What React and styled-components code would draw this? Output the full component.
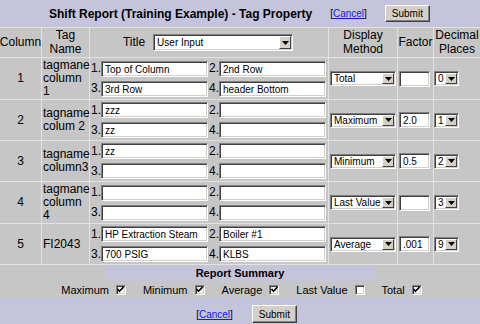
import React from 'react'
import styled, { createGlobalStyle } from 'styled-components'

const LAVENDER = '#c4c4dc'
const GRAY = '#c6c6c6'
const LINE = '#e2e2e2'

const GlobalStyle = createGlobalStyle`
  html, body {
    margin: 0;
    padding: 0;
    background: ${LAVENDER};
  }
  body {
    font-family: "Liberation Sans", Arial, sans-serif;
    color: #000;
  }
`

const Page = styled('main')`
  width: 480px;
  min-height: 324px;
  background: ${LAVENDER};
`

const TopBar = styled('header')`
  height: 27px;
  display: flex;
  align-items: center;
  gap: 18px;
  padding-left: 49px;
`

const PageTitle = styled('h1')`
  margin: 0;
  font-size: 12px;
  font-weight: bold;
`

const LinkText = styled('span')`
  font-size: 10px;
  color: #000;

  a {
    color: #1414ff;
    text-decoration: underline;
  }
`

const Button = styled('button')`
  width: 45px;
  height: ${p => p.$h || 17}px;
  padding: 0;
  margin: 0;
  font-family: "Liberation Sans", Arial, sans-serif;
  font-size: 10px;
  color: #000;
  background: #d4d0c8;
  border: 1px solid;
  border-color: #fff #404040 #404040 #fff;
  box-shadow: inset -1px -1px #808080;
`

const Grid = styled('section')`
  display: grid;
  grid-template-columns: 41px 47px 238px 68px 35px 46px;
  gap: 1px;
  padding: 1px 0;
  background: ${LINE};
`

const HeadCell = styled('div')`
  background: ${GRAY};
  font-size: 12px;
  line-height: 13.5px;
  height: 29px;
  display: flex;
  align-items: center;
  justify-content: center;
  text-align: center;
`

const Cell = styled('div')`
  box-sizing: border-box;
  background: ${GRAY};
  font-size: 12px;
  line-height: 13px;
  display: flex;
  align-items: center;
  justify-content: ${p => p.$align || 'center'};
  padding: ${p => p.$pad || '0'};
`

const TitleHead = styled(HeadCell)`
  gap: 8px;
  padding-right: 2px;
`

const Fields = styled('div')`
  display: grid;
  grid-template-columns: 11px 107px 11px 107px;
  grid-auto-rows: 20px;
  align-items: center;
  padding-right: 2px;
`

const FieldLabel = styled('span')`
  font-size: 12px;
  text-align: right;
`

const inset = `
  box-sizing: border-box;
  background: #fff;
  border: 1px solid;
  border-color: #808080 #fff #fff #808080;
  box-shadow: inset 1px 1px #404040, inset -1px -1px #d4d0c8;
`

const TextBox = styled('div')`
  ${inset}
  width: ${p => p.$w ? p.$w + 'px' : '100%'};
  height: 16px;
  padding: 1px 3px 0;
  font-size: 10px;
  line-height: 13px;
  text-align: left;
  white-space: nowrap;
  overflow: hidden;
`

const Dropdown = styled('div')`
  ${inset}
  width: ${p => p.$w}px;
  height: ${p => p.$h}px;
  display: flex;
  align-items: stretch;
  padding: 1px 1px 1px 3px;
  font-size: 10px;
  text-align: left;
`

const DropText = styled('span')`
  flex: 1;
  line-height: ${p => p.$h - 4}px;
  white-space: nowrap;
  overflow: hidden;
`

const DropButton = styled('span')`
  width: 12px;
  flex: none;
  box-sizing: border-box;
  background: #d4d0c8;
  border: 1px solid;
  border-color: #fff #404040 #404040 #fff;
  display: flex;
  align-items: center;
  justify-content: center;
`

const Summary = styled('section')`
  background: ${GRAY};
  padding-top: 1px;
`

const SummaryBand = styled('h2')`
  width: 270px;
  height: 15px;
  margin: 0 auto;
  background: ${LAVENDER};
  font-size: 11px;
  font-weight: bold;
  line-height: 15px;
  text-align: center;
`

const CheckRow = styled('div')`
  height: 17px;
  display: flex;
  align-items: center;
  justify-content: center;
  gap: 17px;
  padding-left: 3px;
`

const CheckItem = styled('label')`
  display: flex;
  align-items: center;
  gap: 7px;
  font-size: 11px;
`

const Box = styled('span')`
  ${inset}
  width: 10px;
  height: 10px;
  display: flex;
  align-items: center;
  justify-content: center;
  background: ${p => p.$on ? '#f0f0f0' : '#fff'};
`

const BottomBar = styled('footer')`
  display: flex;
  align-items: center;
  justify-content: center;
  gap: 19px;
  padding: 7px 0 0 13px;
`

const Arrow = () => (
  <svg width="7" height="4" viewBox="0 0 7 4">
    <polygon points="0,0 7,0 3.5,4" fill="#000" />
  </svg>
)

const Select = ({ w, h = 15, children }) => (
  <Dropdown $w={w} $h={h}>
    <DropText $h={h}>{children}</DropText>
    <DropButton><Arrow /></DropButton>
  </Dropdown>
)

const Check = ({ on }) => (
  <Box $on={on}>
    {on && (
      <svg width="7" height="7" viewBox="0 0 7 7">
        <path d="M0.5 3 L2.5 5.2 L6.5 1" stroke="#000" strokeWidth="1.6" fill="none" />
      </svg>
    )}
  </Box>
)

const Cancel = () => (
  <LinkText>[<a href="#">Cancel</a>]</LinkText>
)

const rows = [
  { n: 1, tag: ['tagmane', 'column', '1'], f: ['Top of Column', '2nd Row', '3rd Row', 'header Bottom'], method: 'Total', factor: '', dec: '0' },
  { n: 2, tag: ['tagname', 'colum 2'], f: ['zzz', '', 'zz', ''], method: 'Maximum', factor: '2.0', dec: '1' },
  { n: 3, tag: ['tagname', 'column3'], f: ['zz', '', '', ''], method: 'Minimum', factor: '0.5', dec: '2' },
  { n: 4, tag: ['tagmane', 'column', '4'], f: ['', '', '', ''], method: 'Last Value', factor: '', dec: '3' },
  { n: 5, tag: ['FI2043'], f: ['HP Extraction Steam', 'Boiler #1', '700 PSIG', 'KLBS'], method: 'Average', factor: '.001', dec: '9' },
]

const summary = [
  ['Maximum', true],
  ['Minimum', true],
  ['Average', true],
  ['Last Value', false],
  ['Total', true],
]

const Row = ({ n, tag, f, method, factor, dec }) => (
  <>
    <Cell>{n}</Cell>
    <Cell $align="flex-start" $pad="1px 0 1px 1px">
      <div>{tag.map((t, i) => <div key={i}>{t}</div>)}</div>
    </Cell>
    <Cell $align="stretch">
      <Fields>
        <FieldLabel>1.</FieldLabel><TextBox>{f[0]}</TextBox>
        <FieldLabel>2.</FieldLabel><TextBox>{f[1]}</TextBox>
        <FieldLabel>3.</FieldLabel><TextBox>{f[2]}</TextBox>
        <FieldLabel>4.</FieldLabel><TextBox>{f[3]}</TextBox>
      </Fields>
    </Cell>
    <Cell $align="flex-start" $pad="0 0 0 1px"><Select w={66}>{method}</Select></Cell>
    <Cell $align="flex-start" $pad="0 0 0 1px"><TextBox $w={31}>{factor}</TextBox></Cell>
    <Cell $align="flex-start"><Select w={25}>{dec}</Select></Cell>
  </>
)

const App = () => (
  <Page>
    <GlobalStyle />
    <TopBar>
      <PageTitle>Shift Report (Training Example) - Tag Property</PageTitle>
      <Cancel />
      <Button>Submit</Button>
    </TopBar>
    <Grid>
      <HeadCell>Column</HeadCell>
      <HeadCell>Tag<br />Name</HeadCell>
      <TitleHead>
        <span>Title</span>
        <Select w={140} h={17}>User Input</Select>
      </TitleHead>
      <HeadCell>Display<br />Method</HeadCell>
      <HeadCell>Factor</HeadCell>
      <HeadCell>Decimal<br />Places</HeadCell>
      {rows.map(r => <Row key={r.n} {...r} />)}
    </Grid>
    <Summary>
      <SummaryBand>Report Summary</SummaryBand>
      <CheckRow>
        {summary.map(([label, on]) => (
          <CheckItem key={label}>{label} <Check on={on} /></CheckItem>
        ))}
      </CheckRow>
    </Summary>
    <BottomBar>
      <Cancel />
      <Button $h={18}>Submit</Button>
    </BottomBar>
  </Page>
)

export default App
